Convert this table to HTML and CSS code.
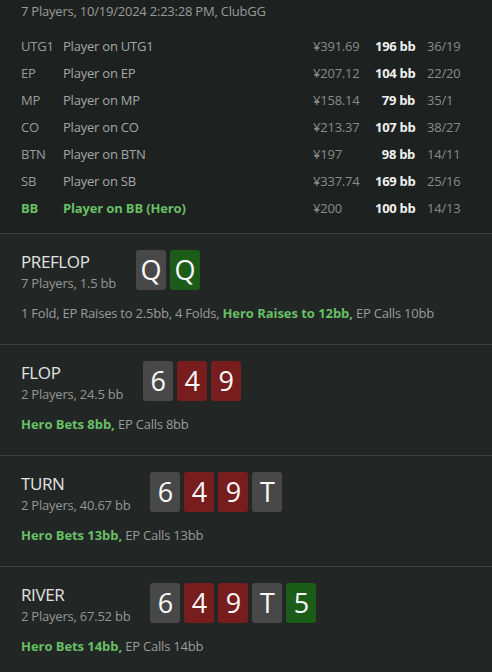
FILE: index.html
```html
<!DOCTYPE html>
<html>
<head>
<meta charset="utf-8">
<link rel="stylesheet" href="styles.css">
</head>
<body>
<div class="top">
  <div class="meta">7 Players, 10/19/2024 2:23:28 PM, ClubGG</div>
  <div class="players">
    <div class="row"><span class="pos">UTG1</span><span class="name">Player on UTG1</span><span class="money">¥391.69</span><span class="bb">196 bb</span><span class="ratio">36/19</span></div>
    <div class="row"><span class="pos">EP</span><span class="name">Player on EP</span><span class="money">¥207.12</span><span class="bb">104 bb</span><span class="ratio">22/20</span></div>
    <div class="row"><span class="pos">MP</span><span class="name">Player on MP</span><span class="money">¥158.14</span><span class="bb">79 bb</span><span class="ratio">35/1</span></div>
    <div class="row"><span class="pos">CO</span><span class="name">Player on CO</span><span class="money">¥213.37</span><span class="bb">107 bb</span><span class="ratio">38/27</span></div>
    <div class="row"><span class="pos">BTN</span><span class="name">Player on BTN</span><span class="money">¥197</span><span class="bb">98 bb</span><span class="ratio">14/11</span></div>
    <div class="row"><span class="pos">SB</span><span class="name">Player on SB</span><span class="money">¥337.74</span><span class="bb">169 bb</span><span class="ratio">25/16</span></div>
    <div class="row hero"><span class="pos">BB</span><span class="name">Player on BB (Hero)</span><span class="money">¥200</span><span class="bb">100 bb</span><span class="ratio">14/13</span></div>
  </div>
</div>

<section class="street">
  <div class="head">
    <div class="info"><div class="title">PREFLOP</div><div class="sub">7 Players, 1.5 bb</div></div>
    <div class="cards"><span class="card gray">Q</span><span class="card green">Q</span></div>
  </div>
  <div class="actions">1 Fold, EP Raises to 2.5bb, 4 Folds, <b class="hero-act">Hero Raises to 12bb,</b> EP Calls 10bb</div>
</section>

<section class="street">
  <div class="head">
    <div class="info"><div class="title">FLOP</div><div class="sub">2 Players, 24.5 bb</div></div>
    <div class="cards"><span class="card gray">6</span><span class="card red">4</span><span class="card red">9</span></div>
  </div>
  <div class="actions"><b class="hero-act">Hero Bets 8bb,</b> EP Calls 8bb</div>
</section>

<section class="street">
  <div class="head">
    <div class="info"><div class="title">TURN</div><div class="sub">2 Players, 40.67 bb</div></div>
    <div class="cards"><span class="card gray">6</span><span class="card red">4</span><span class="card red">9</span><span class="card gray">T</span></div>
  </div>
  <div class="actions"><b class="hero-act">Hero Bets 13bb,</b> EP Calls 13bb</div>
</section>

<section class="street">
  <div class="head">
    <div class="info"><div class="title">RIVER</div><div class="sub">2 Players, 67.52 bb</div></div>
    <div class="cards"><span class="card gray">6</span><span class="card red">4</span><span class="card red">9</span><span class="card gray">T</span><span class="card green">5</span></div>
  </div>
  <div class="actions"><b class="hero-act">Hero Bets 14bb,</b> EP Calls 14bb</div>
</section>
</body>
</html>
```

FILE: styles.css
```css
* { box-sizing: border-box; }
html, body { margin: 0; padding: 0; }
body {
  background: #222726;
  font-family: "Open Sans", "Noto Sans", sans-serif;
  font-size: 13px;
  letter-spacing: -0.22px;
  color: #9a9a9a;
  width: 492px;
  height: 672px;
  overflow: hidden;
}
b { letter-spacing: -0.05px; }
.top {
  background: #1d2220;
  padding: 1px 0 11px 21px;
}
.meta {
  line-height: 20px;
  color: #9a9a9a;
  margin-bottom: 12px;
}
.row {
  display: grid;
  grid-template-columns: 42px 250px 62px 40px 77px;
  line-height: 27px;
  height: 27px;
  white-space: nowrap;
}
.pos { color: #9c9c9c; }
.name { color: #a6a6a6; }
.money { color: #8a8a8a; }
.bb { color: #f0f0f0; font-weight: 700; text-align: right; letter-spacing: -0.3px; }
.ratio { color: #8a8a8a; padding-left: 12px; }
.row.hero .pos, .row.hero .name { color: #68bf65; font-weight: 700; letter-spacing: -0.15px; }
.street {
  border-top: 1px solid #3b3f3e;
  padding: 16px 21px 23px;
  height: 111px;
}
.head {
  display: flex;
  align-items: flex-start;
  gap: 20px;
}
.title {
  font-size: 17px;
  line-height: 24px;
  letter-spacing: -0.4px;
  color: #e2e2e2;
}
.sub {
  line-height: 18px;
  color: #959595;
}
.cards { display: flex; gap: 4px; }
.card {
  width: 30px;
  height: 40px;
  border-radius: 3px;
  color: #fafafa;
  font-size: 27px;
  line-height: 40px;
  letter-spacing: 0;
  text-align: center;
}
.card.gray { background: #484848; }
.card.red { background: #771d1d; }
.card.green { background: #1b5c18; }
.actions {
  margin-top: 11px;
  line-height: 20px;
  white-space: nowrap;
}
.hero-act { color: #68bf65; font-weight: 700; }
```
